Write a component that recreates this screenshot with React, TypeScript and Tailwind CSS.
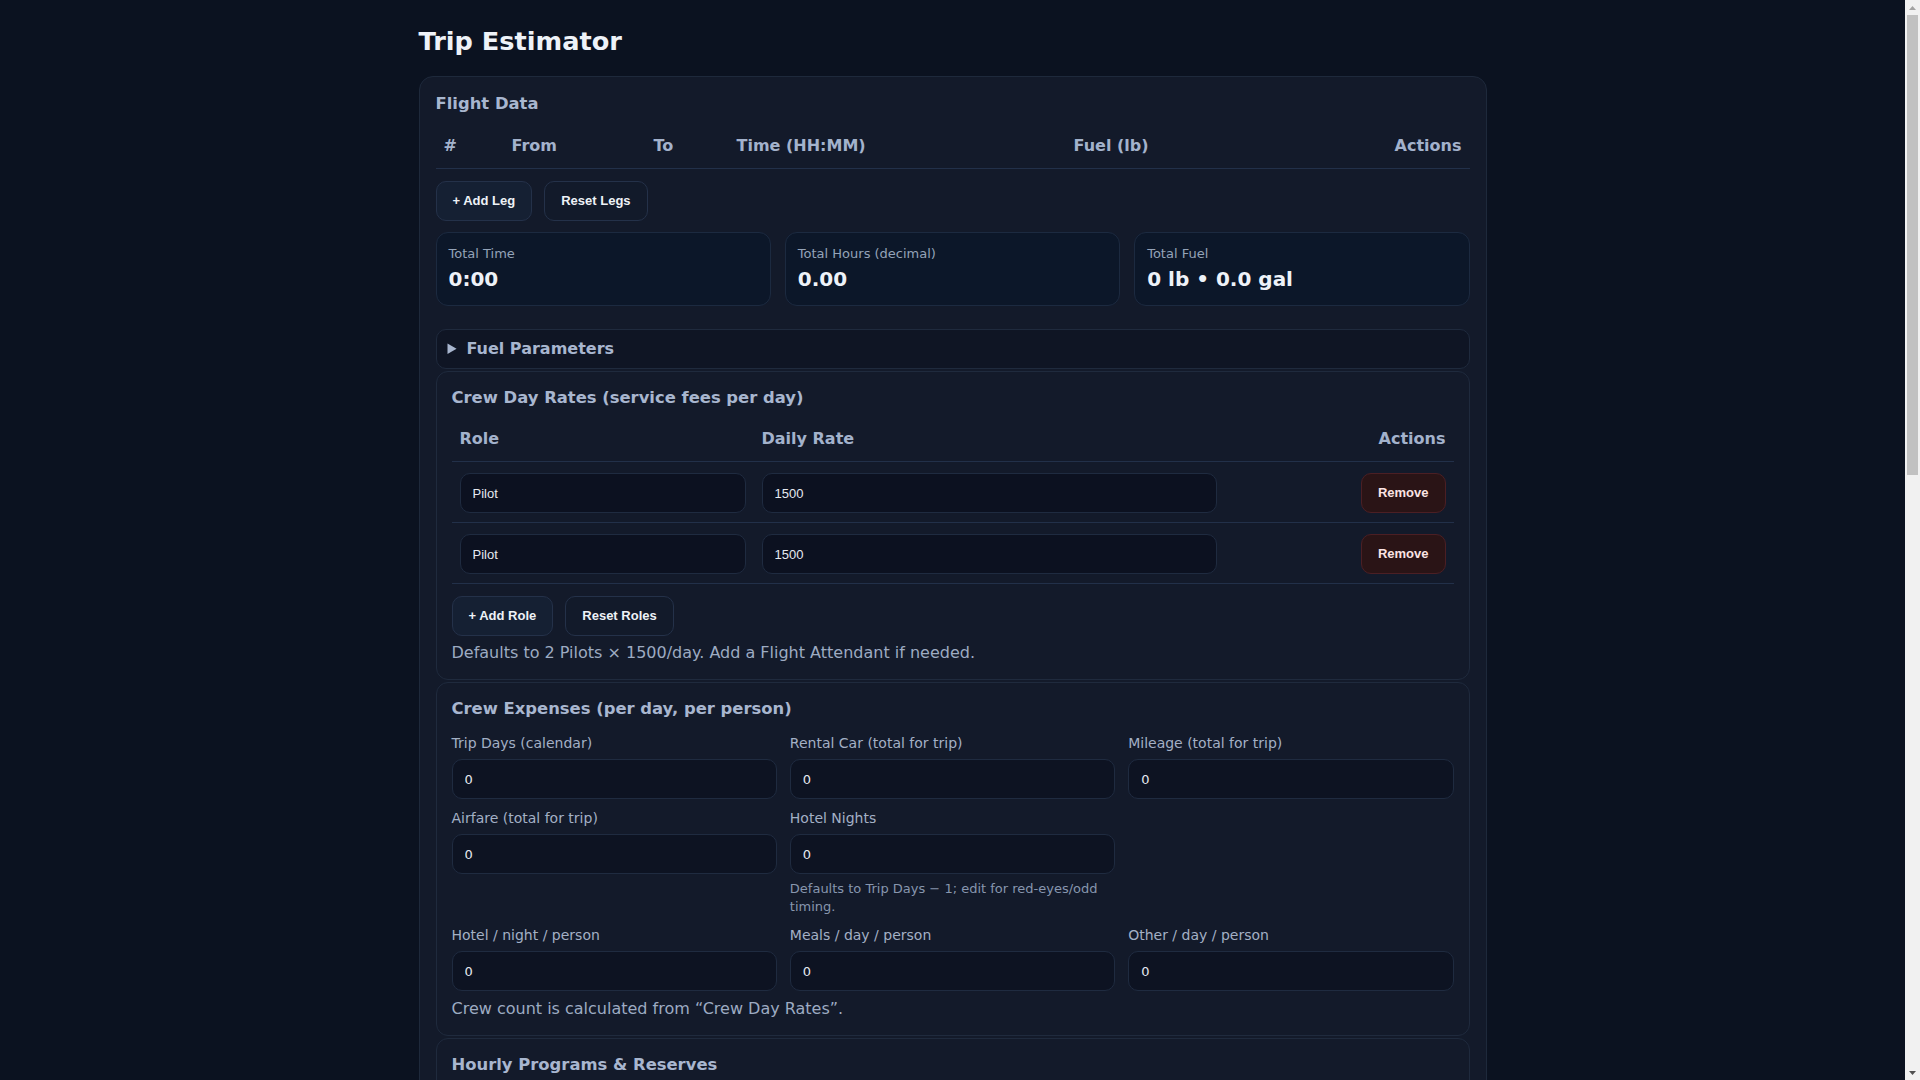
import React from 'react';

type Field = { label: string; hint?: string };

const LEG_COLS = [
  { label: '#', cls: 'w-[68px] text-left' },
  { label: 'From', cls: 'w-[142px] text-left' },
  { label: 'To', cls: 'w-[83px] text-left' },
  { label: 'Time (HH:MM)', cls: 'w-[337px] text-left' },
  { label: 'Fuel (lb)', cls: 'w-[236px] text-left' },
  { label: 'Actions', cls: 'text-right' },
];

const TOTALS = [
  { label: 'Total Time', value: '0:00' },
  { label: 'Total Hours (decimal)', value: '0.00' },
  { label: 'Total Fuel', value: '0 lb • 0.0 gal' },
];

const ROLES = [
  { role: 'Pilot', rate: '1500' },
  { role: 'Pilot', rate: '1500' },
];

// null = empty grid cell
const EXPENSES: (Field | null)[] = [
  { label: 'Trip Days (calendar)' },
  { label: 'Rental Car (total for trip)' },
  { label: 'Mileage (total for trip)' },
  { label: 'Airfare (total for trip)' },
  { label: 'Hotel Nights', hint: 'Defaults to Trip Days − 1; edit for red-eyes/odd timing.' },
  null,
  { label: 'Hotel / night / person' },
  { label: 'Meals / day / person' },
  { label: 'Other / day / person' },
];

const HOURLY: Field[] = [
  { label: 'Hourly Program ($/hr)' },
  { label: 'Engine Reserves ($/hr)' },
  { label: 'APU Reserves ($/hr)' },
  { label: 'Maintenance Reserve ($/hr)' },
  { label: 'Avionics Program ($/hr)' },
  { label: 'Other Reserves ($/hr)' },
];

function Btn({ children, primary = false }: { children: React.ReactNode; primary?: boolean }) {
  return (
    <button
      type="button"
      className={`h-10 rounded-[10px] border border-[#243149] px-4 font-['Liberation_Sans',Arial,sans-serif] text-[13px] font-bold text-[#eef2f7] ${
        primary ? 'bg-[#152033]' : 'bg-[#121a2a]'
      }`}
    >
      {children}
    </button>
  );
}

function NumField({ field }: { field: Field }) {
  return (
    <div className="flex flex-col">
      <label className="text-sm leading-5 text-[#a3b0c5]">{field.label}</label>
      <input
        defaultValue="0"
        className="mt-1.5 h-10 w-full rounded-[10px] border border-[#1f2b40] bg-[#0d1322] px-3 text-[13px] text-[#e5e9f0] outline-none"
      />
      {field.hint && <p className="mt-1.5 text-[13px] leading-[18px] text-[#8796ae]">{field.hint}</p>}
    </div>
  );
}

function Section({ title, children }: { title: string; children?: React.ReactNode }) {
  return (
    <section className="mt-0.5 rounded-[12px] border border-[#1f2a3d] bg-[#131a2a] px-[15px] py-[14px]">
      <h3 className="text-[16.4px] font-bold leading-6 text-[#a8b6cf]">{title}</h3>
      {children}
    </section>
  );
}

// browser's classic scrollbar, as seen in the screenshot
function Scrollbar() {
  return (
    <div className="fixed right-0 top-0 flex h-screen w-[15px] flex-col bg-[#f1f1f1]">
      <div className="flex h-[15px] items-center justify-center">
        <svg width="7" height="4" viewBox="0 0 7 4">
          <path d="M3.5 0L7 4H0z" fill="#a3a3a3" />
        </svg>
      </div>
      <div className="mx-[2px] h-[460px] bg-[#c1c1c1]" />
      <div className="flex-1" />
      <div className="flex h-[15px] items-center justify-center">
        <svg width="7" height="4" viewBox="0 0 7 4">
          <path d="M0 0h7L3.5 4z" fill="#505050" />
        </svg>
      </div>
    </div>
  );
}

export default function App() {
  return (
    <div className="min-h-[2465px] bg-[#0b1220] pr-[15px] font-['DejaVu_Sans',sans-serif] text-[#e5e9f0]">
      <div className="mx-auto max-w-[1100px] px-4 pb-10 pt-[23px]">
        <h1 className="mb-[17px] text-[25.6px] font-bold leading-9 text-[#eef2f8]">Trip Estimator</h1>

        <div className="rounded-[14px] border border-[#1e293b] bg-[#131a2a] px-4 pb-4 pt-[15px]">
          <h2 className="text-[16.4px] font-bold leading-6 text-[#a8b6cf]">Flight Data</h2>

          {/* Legs table — empty by default */}
          <table className="mt-2 w-full table-fixed border-collapse">
            <thead>
              <tr className="border-b border-[#223049]">
                {LEG_COLS.map((c) => (
                  <th key={c.label} className={`${c.cls} px-2 py-[10px] text-base font-bold leading-6 text-[#a3b2cc]`}>
                    {c.label}
                  </th>
                ))}
              </tr>
            </thead>
            <tbody />
          </table>

          <div className="mt-3 flex gap-3">
            <Btn primary>+ Add Leg</Btn>
            <Btn>Reset Legs</Btn>
          </div>

          <div className="mt-[11px] grid grid-cols-3 gap-[14px]">
            {TOTALS.map((t) => (
              <div key={t.label} className="rounded-[12px] border border-[#1c2a40] bg-[#0c1729] p-3">
                <div className="text-[13px] leading-[18px] text-[#94a3b8]">{t.label}</div>
                <div className="mt-[2px] text-xl font-bold leading-7 text-[#eef2f8]">{t.value}</div>
              </div>
            ))}
          </div>

          <details className="mt-[23px] rounded-[10px] border border-[#1f2a3d] bg-[#0f1524] py-[7px] pl-[11px] pr-[10px]">
            <summary className="cursor-pointer text-base font-bold leading-6 text-[#a8b6cf]">
              <span className="ml-[2px]">Fuel Parameters</span>
            </summary>
          </details>

          <Section title="Crew Day Rates (service fees per day)">
            <table className="mt-[7px] w-full table-fixed border-collapse">
              <thead>
                <tr className="border-b border-[#223049]">
                  <th className="w-[302px] px-2 py-[10px] text-left text-base font-bold leading-6 text-[#a3b2cc]">Role</th>
                  <th className="w-[471px] px-2 py-[10px] text-left text-base font-bold leading-6 text-[#a3b2cc]">Daily Rate</th>
                  <th className="px-2 py-[10px] text-right text-base font-bold leading-6 text-[#a3b2cc]">Actions</th>
                </tr>
              </thead>
              <tbody>
                {ROLES.map((r, i) => (
                  <tr key={i} className="border-b border-[#223049]">
                    <td className="px-2 pb-[9px] pt-[11px]">
                      <input
                        defaultValue={r.role}
                        className="h-10 w-full rounded-[10px] border border-[#1f2b40] bg-[#0c1120] px-3 font-['Liberation_Sans',Arial,sans-serif] text-[13px] text-[#e5e9f0] outline-none"
                      />
                    </td>
                    <td className="px-2 pb-[9px] pt-[11px]">
                      <input
                        defaultValue={r.rate}
                        className="h-10 w-full rounded-[10px] border border-[#1f2b40] bg-[#0c1120] px-3 font-['Liberation_Sans',Arial,sans-serif] text-[13px] text-[#e5e9f0] outline-none"
                      />
                    </td>
                    <td className="px-2 pb-[9px] pt-[11px] text-right">
                      <button
                        type="button"
                        className="h-10 rounded-[10px] border border-[#4b1f24] bg-[#2a1416] px-4 font-['Liberation_Sans',Arial,sans-serif] text-[13px] font-bold text-[#fbe3e3]"
                      >
                        Remove
                      </button>
                    </td>
                  </tr>
                ))}
              </tbody>
            </table>
            <div className="mt-3 flex gap-3">
              <Btn primary>+ Add Role</Btn>
              <Btn>Reset Roles</Btn>
            </div>
            <p className="mt-[5px] text-base leading-6 text-[#9dabc2]">
              Defaults to 2 Pilots × 1500/day. Add a Flight Attendant if needed.
            </p>
          </Section>

          <Section title="Crew Expenses (per day, per person)">
            <div className="mt-3 grid grid-cols-3 gap-x-[13px] gap-y-[9px]">
              {EXPENSES.map((f, i) => (f ? <NumField key={i} field={f} /> : <div key={i} />))}
            </div>
            <p className="mt-1.5 text-base leading-6 text-[#9dabc2]">Crew count is calculated from “Crew Day Rates”.</p>
          </Section>

          <Section title="Hourly Programs & Reserves">
            <div className="mt-3 grid grid-cols-3 gap-x-[13px] gap-y-[9px]">
              {HOURLY.map((f) => (
                <NumField key={f.label} field={f} />
              ))}
            </div>
            <p className="mt-1.5 text-base leading-6 text-[#9dabc2]">Applied to total flight hours.</p>
          </Section>

          <Section title="Fees & Taxes">
            <div className="mt-3 grid grid-cols-3 gap-x-[13px] gap-y-[9px]">
              {['Landing Fees', 'Handling / FBO', 'Catering', 'Federal Excise Tax (%)', 'Segment Fee / pax', 'Passengers'].map((l) => (
                <NumField key={l} field={{ label: l }} />
              ))}
            </div>
          </Section>

          <Section title="Trip Summary">
            <div className="mt-3 grid grid-cols-3 gap-[14px]">
              {['Fuel Cost', 'Crew Cost', 'Hourly Programs', 'Fees & Taxes', 'Subtotal', 'Estimated Total'].map((l) => (
                <div key={l} className="rounded-[12px] border border-[#1c2a40] bg-[#0c1729] p-3">
                  <div className="text-[13px] leading-[18px] text-[#94a3b8]">{l}</div>
                  <div className="mt-[2px] text-xl font-bold leading-7 text-[#eef2f8]">$0.00</div>
                </div>
              ))}
            </div>
          </Section>
        </div>
      </div>
      <Scrollbar />
    </div>
  );
}
